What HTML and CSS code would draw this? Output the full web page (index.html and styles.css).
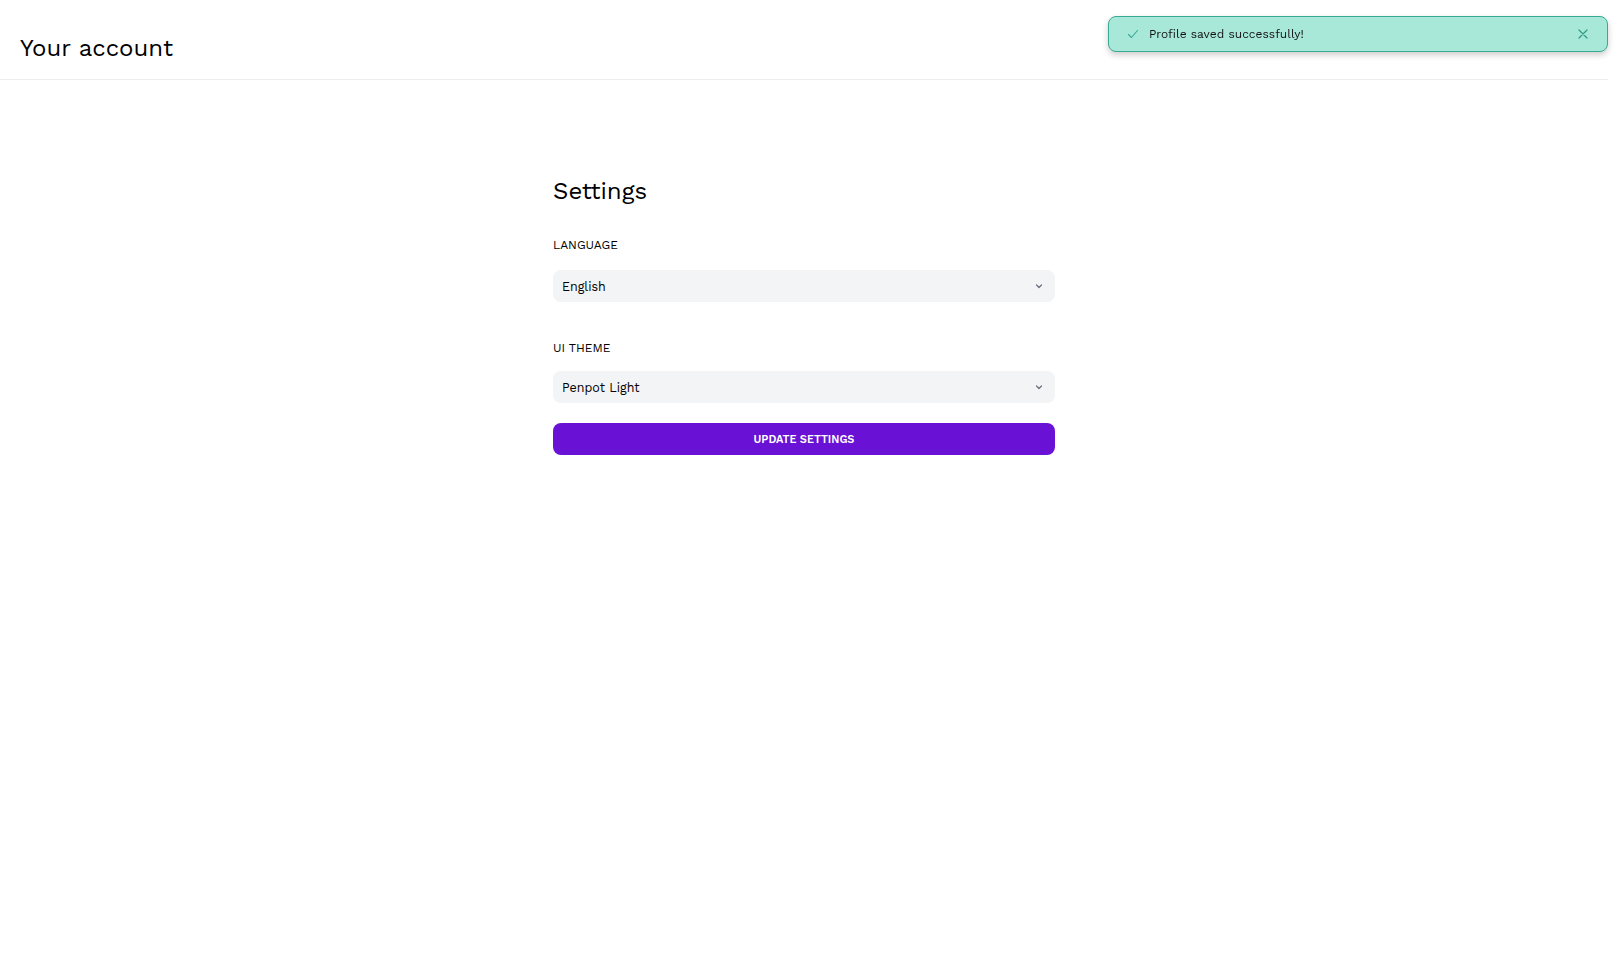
FILE: index.html
```html
<!DOCTYPE html>
<html lang="en">
<head>
<meta charset="utf-8">
<title>Your account</title>
<link rel="stylesheet" href="styles.css">
</head>
<body>
<div class="app">
  <header class="header">
    <h1 class="header-title">Your account</h1>
  </header>
  <main class="main">
    <section class="settings">
      <h2 class="settings-title">Settings</h2>
      <div class="field field-language">
        <div class="field-label">Language</div>
        <div class="select">
          <span class="select-value">English</span>
          <svg class="chevron" width="8" height="8" viewBox="0 0 8 8"><path d="M1.5 3l2.5 2.5L6.5 3" fill="none" stroke="#6b7280" stroke-width="1.3" stroke-linecap="round" stroke-linejoin="round"/></svg>
        </div>
      </div>
      <div class="field field-theme">
        <div class="field-label">UI Theme</div>
        <div class="select">
          <span class="select-value">Penpot Light</span>
          <svg class="chevron" width="8" height="8" viewBox="0 0 8 8"><path d="M1.5 3l2.5 2.5L6.5 3" fill="none" stroke="#6b7280" stroke-width="1.3" stroke-linecap="round" stroke-linejoin="round"/></svg>
        </div>
      </div>
      <button class="btn-primary">Update settings</button>
    </section>
  </main>
</div>
<div class="toast">
  <svg class="toast-icon" width="12" height="12" viewBox="0 0 12 12"><path d="M1.5 6.5l3 3 6-7" fill="none" stroke="#3aa892" stroke-width="1.1" stroke-linecap="round" stroke-linejoin="round"/></svg>
  <span class="toast-text">Profile saved successfully!</span>
  <svg class="toast-close" width="12" height="12" viewBox="0 0 12 12"><path d="M2 2l8 8M10 2l-8 8" fill="none" stroke="#2f9b86" stroke-width="1.2" stroke-linecap="round"/></svg>
</div>
</body>
</html>
```
FILE: styles.css
```css
* { box-sizing: border-box; }
html, body {
  margin: 0;
  padding: 0;
  background: #ffffff;
  font-family: "Work Sans", Inter, "Liberation Sans", sans-serif;
  color: #000000;
}
.app {
  width: 1608px;
}
.header {
  height: 80px;
  border-bottom: 1px solid #eeeeee;
  display: flex;
  align-items: center;
  padding: 16px 20px 0 20px;
}
.header-title {
  margin: 0;
  font-size: 24px;
  font-weight: 400;
  letter-spacing: 0;
}
.main {
  display: flex;
  justify-content: center;
  padding-top: 95px;
}
.settings {
  width: 502px;
  display: flex;
  flex-direction: column;
}
.settings-title {
  margin: 0 0 30px 0;
  font-size: 24px;
  font-weight: 400;
  line-height: 32px;
}
.field {
  display: flex;
  flex-direction: column;
}
.field-language {
  margin-bottom: 38px;
}
.field-theme {
  margin-bottom: 20px;
}
.field-label {
  font-size: 12px;
  line-height: 16px;
  text-transform: uppercase;
  color: #000;
}
.field-language .field-label {
  margin-bottom: 17px;
}
.field-theme .field-label {
  margin-bottom: 15px;
}
.select {
  height: 32px;
  background: #f3f4f6;
  border-radius: 8px;
  display: flex;
  align-items: center;
  justify-content: space-between;
  padding: 0 12px 0 9px;
  font-size: 12.5px;
}
.chevron { display: block; }
.btn-primary {
  height: 32px;
  border: none;
  border-radius: 8px;
  background: #6911d4;
  color: #ffffff;
  font-family: inherit;
  font-size: 11px;
  font-weight: 600;
  text-transform: uppercase;
  letter-spacing: 0;
  cursor: pointer;
}
.toast {
  position: fixed;
  top: 16px;
  left: 1108px;
  width: 500px;
  height: 36px;
  background: #a8e8d8;
  border: 1px solid #3aa892;
  border-radius: 8px;
  box-shadow: 0 3px 6px rgba(0, 0, 0, 0.2);
  display: flex;
  align-items: center;
  padding: 0 18px 0 18px;
  gap: 10px;
}
.toast-text {
  font-size: 12px;
  color: #111;
  flex: 1;
  padding-bottom: 1px;
}
.toast-icon, .toast-close { display: block; }
```
